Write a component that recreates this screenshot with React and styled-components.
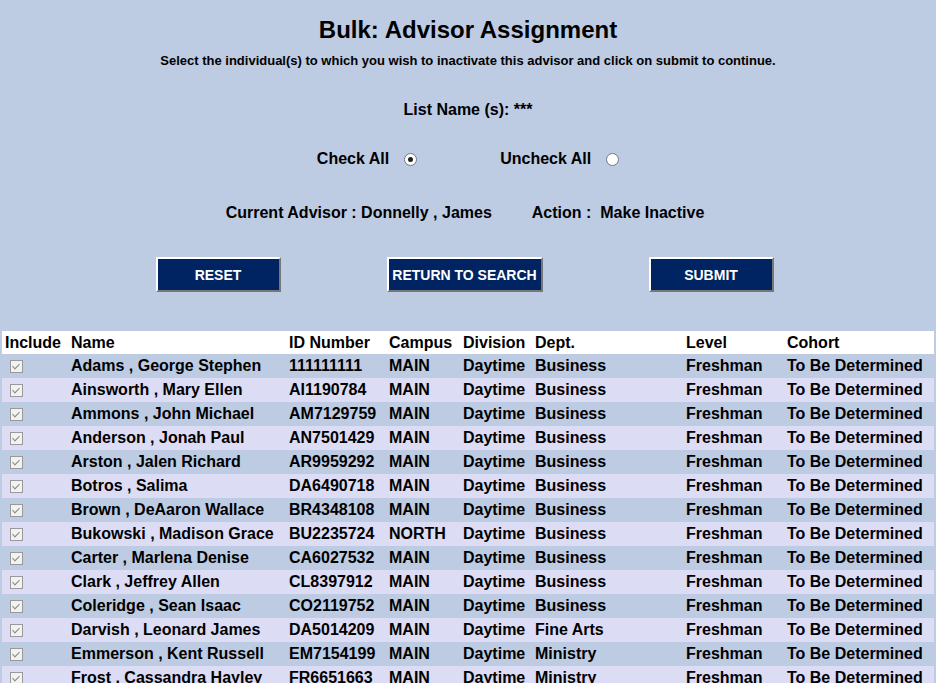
import React from "react";
import styled, { createGlobalStyle } from "styled-components";

const G = createGlobalStyle`
  html,body{margin:0;padding:0;background:#bdcbe3;font-family:"Liberation Sans",Arial,sans-serif;color:#000;}
`;
const Page = styled.div`display:flex;flex-direction:column;align-items:center;padding-top:15px;`;
const Title = styled.h1`margin:0;font-size:24px;font-weight:bold;line-height:30px;`;
const Sub = styled.div`margin-top:8px;font-size:13px;font-weight:bold;`;
const Line = styled.div`display:flex;align-items:center;gap:${p=>p.gap||0}px;font-size:16px;font-weight:bold;margin-top:${p=>p.mt}px;margin-left:${p=>p.ml||0}px;`;
const Radio = styled.span`display:inline-block;width:11px;height:11px;border-radius:50%;border:1px solid #777;background:#fff;margin-left:15px;position:relative;
  &::after{content:"";display:${p=>p.on?"block":"none"};position:absolute;left:3px;top:3px;width:5px;height:5px;border-radius:50%;background:#222;}`;
const Spacer = styled.span`width:${p=>p.w}px;`;
const Buttons = styled.div`display:flex;gap:106px;margin-top:35px;margin-left:-7px;`;
const Btn = styled.button`height:35px;width:${p=>p.w}px;background:#002461;color:#fff;font-family:inherit;font-weight:bold;font-size:14px;
  border:2px solid;border-color:#fff #777 #777 #fff;padding:0;`;
const Table = styled.table`margin:39px 0 0 2px;align-self:flex-start;width:932px;border-collapse:collapse;table-layout:fixed;font-size:16px;font-weight:bold;`;
const Th = styled.th`text-align:left;background:#fff;height:23px;padding:0 0 0 3px;font-weight:bold;`;
const Tr = styled.tr`background:${p=>p.alt?"#dcdcf5":"#bdcbe3"};`;
const Td = styled.td`height:24px;padding:0 0 0 3px;white-space:nowrap;overflow:hidden;`;
const Box = styled.span`display:inline-block;width:11px;height:11px;border:1px solid #999;background:#f2f2f2;margin-left:5px;vertical-align:middle;position:relative;
  &::after{content:"";position:absolute;left:3px;top:1px;width:3px;height:6px;border:solid #888;border-width:0 1px 1px 0;transform:rotate(45deg);}`;

const rows = [
["Adams , George Stephen","111111111","MAIN","Business"],
["Ainsworth , Mary Ellen","AI1190784","MAIN","Business"],
["Ammons , John Michael","AM7129759","MAIN","Business"],
["Anderson , Jonah Paul","AN7501429","MAIN","Business"],
["Arston , Jalen Richard","AR9959292","MAIN","Business"],
["Botros , Salima","DA6490718","MAIN","Business"],
["Brown , DeAaron Wallace","BR4348108","MAIN","Business"],
["Bukowski , Madison Grace","BU2235724","NORTH","Business"],
["Carter , Marlena Denise","CA6027532","MAIN","Business"],
["Clark , Jeffrey Allen","CL8397912","MAIN","Business"],
["Coleridge , Sean Isaac","CO2119752","MAIN","Business"],
["Darvish , Leonard James","DA5014209","MAIN","Fine Arts"],
["Emmerson , Kent Russell","EM7154199","MAIN","Ministry"],
["Frost , Cassandra Hayley","FR6651663","MAIN","Ministry"],
];
const widths=[66,218,100,74,72,151,101,150];

export default function App(){
  return <><G/><Page>
    <Title>Bulk: Advisor Assignment</Title>
    <Sub>Select the individual(s) to which you wish to inactivate this advisor and click on submit to continue.</Sub>
    <Line mt={33}>List Name (s): ***</Line>
    <Line mt={31} ml={0}><span>Check All</span><Radio on/><Spacer w={83}/><span>Uncheck All</span><Radio/></Line>
    <Line mt={36} gap={40} ml={-6}><span>Current Advisor : Donnelly , James</span><span>Action :&nbsp; Make Inactive</span></Line>
    <Buttons><Btn w={125}>RESET</Btn><Btn w={156}>RETURN TO SEARCH</Btn><Btn w={125}>SUBMIT</Btn></Buttons>
    <Table>
      <colgroup>{widths.map((w,i)=><col key={i} style={{width:w}}/>)}</colgroup>
      <thead><tr>{["Include","Name","ID Number","Campus","Division","Dept.","Level","Cohort"].map(h=><Th key={h}>{h}</Th>)}</tr></thead>
      <tbody>{rows.map((r,i)=><Tr key={i} alt={i%2===1}>
        <Td><Box/></Td><Td>{r[0]}</Td><Td>{r[1]}</Td><Td>{r[2]}</Td><Td>Daytime</Td><Td>{r[3]}</Td><Td>Freshman</Td><Td>To Be Determined</Td>
      </Tr>)}</tbody>
    </Table>
  </Page></>;
}
